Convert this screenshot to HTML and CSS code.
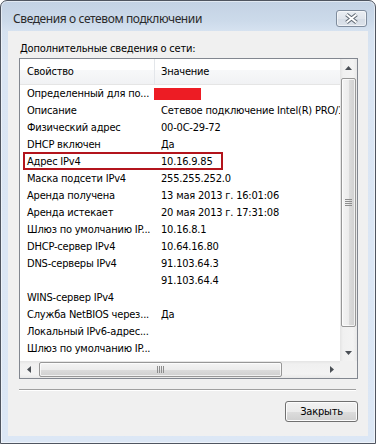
FILE: index.html
```html
<!DOCTYPE html>
<html lang="ru">
<head>
<meta charset="utf-8">
<title>Сведения о сетевом подключении</title>
<link rel="stylesheet" href="styles.css">
</head>
<body>
<div class="window">
  <div class="titlebar">
    <span class="title">Сведения о сетевом подключении</span>
    <div class="close-btn">
      <svg width="29" height="15" viewBox="0 0 29 15">
        <path d="M9.5 3.5 L19.5 11.5 M19.5 3.5 L9.5 11.5" stroke="#5f6873" stroke-width="4" fill="none"/>
        <path d="M9.5 3.5 L19.5 11.5 M19.5 3.5 L9.5 11.5" stroke="#ffffff" stroke-width="2" fill="none"/>
      </svg>
    </div>
  </div>
  <div class="client">
    <div class="label">Дополнительные сведения о сети:</div>
    <div class="listbox">
      <div class="view">
        <div class="header">
          <div class="hc hc1">Свойство</div>
          <div class="hc hc2">Значение</div>
        </div>
        <div class="rows">
          <div class="row"><span class="c1">Определенный для по...</span><span class="redact"></span></div>
          <div class="row"><span class="c1">Описание</span><span class="c2">Сетевое подключение Intel(R) PRO/1000 MT</span></div>
          <div class="row"><span class="c1">Физический адрес</span><span class="c2">00-0C-29-72</span></div>
          <div class="row"><span class="c1">DHCP включен</span><span class="c2">Да</span></div>
          <div class="row marked"><span class="c1">Адрес IPv4</span><span class="c2">10.16.9.85</span><span class="hl"></span></div>
          <div class="row"><span class="c1">Маска подсети IPv4</span><span class="c2">255.255.252.0</span></div>
          <div class="row"><span class="c1">Аренда получена</span><span class="c2">13 мая 2013 г. 16:01:06</span></div>
          <div class="row"><span class="c1">Аренда истекает</span><span class="c2">20 мая 2013 г. 17:31:08</span></div>
          <div class="row"><span class="c1">Шлюз по умолчанию IP...</span><span class="c2">10.16.8.1</span></div>
          <div class="row"><span class="c1">DHCP-сервер IPv4</span><span class="c2">10.64.16.80</span></div>
          <div class="row"><span class="c1">DNS-серверы IPv4</span><span class="c2">91.103.64.3</span></div>
          <div class="row"><span class="c1"></span><span class="c2">91.103.64.4</span></div>
          <div class="row"><span class="c1">WINS-сервер IPv4</span><span class="c2"></span></div>
          <div class="row"><span class="c1">Служба NetBIOS через...</span><span class="c2">Да</span></div>
          <div class="row"><span class="c1">Локальный IPv6-адрес...</span><span class="c2"></span></div>
          <div class="row"><span class="c1">Шлюз по умолчанию IP...</span><span class="c2"></span></div>
          <div class="row"><span class="c1">DNS-серверы IPv6</span><span class="c2"></span></div>
        </div>
      </div>
      <div class="vscroll">
        <div class="sb-btn">
          <svg width="7" height="4" viewBox="0 0 7 4"><path d="M3.5 0 L7 4 L0 4 Z" fill="#4a4f55"/></svg>
        </div>
        <div class="vtrack">
          <div class="vthumb">
            <svg width="7" height="7" viewBox="0 0 7 7">
              <path d="M0 0.5 H7 M0 2.5 H7 M0 4.5 H7 M0 6.5 H7" stroke="#8d8d8d" stroke-width="1"/>
            </svg>
          </div>
        </div>
        <div class="sb-btn">
          <svg width="7" height="4" viewBox="0 0 7 4"><path d="M0 0 L7 0 L3.5 4 Z" fill="#4a4f55"/></svg>
        </div>
      </div>
      <div class="hscroll">
        <div class="sb-btn">
          <svg width="4" height="7" viewBox="0 0 4 7"><path d="M4 0 L4 7 L0 3.5 Z" fill="#4a4f55"/></svg>
        </div>
        <div class="htrack">
          <div class="hthumb">
            <svg width="7" height="7" viewBox="0 0 7 7">
              <path d="M0.5 0 V7 M2.5 0 V7 M4.5 0 V7 M6.5 0 V7" stroke="#8d8d8d" stroke-width="1"/>
            </svg>
          </div>
        </div>
        <div class="sb-btn">
          <svg width="4" height="7" viewBox="0 0 4 7"><path d="M0 0 L4 3.5 L0 7 Z" fill="#4a4f55"/></svg>
        </div>
      </div>
      <div class="corner"></div>
    </div>
    <div class="sep"></div>
    <button class="btn" type="button">Закрыть</button>
  </div>
</div>
</body>
</html>
```

FILE: styles.css
```css
* { box-sizing: border-box; }

html, body {
  margin: 0;
  padding: 0;
}

body {
  width: 376px;
  height: 444px;
  overflow: hidden;
  background: #ffffff;
  font-family: "DejaVu Sans Condensed", "DejaVu Sans", sans-serif;
  font-size: 11px;
  letter-spacing: -0.2px;
  color: #000;
}

.window {
  width: 376px;
  height: 444px;
  border: 1px solid #4f5560;
  border-radius: 7px 7px 0 0;
  background: linear-gradient(to bottom, #c3d2e4 0px, #ccdaea 20px, #d6e2f0 30px, #dae5f3 60px, #dce7f5 100%);
  box-shadow: inset 0 0 0 1px rgba(255, 255, 255, 0.5);
  padding: 0 7px 7px;
  display: flex;
  flex-direction: column;
}

.titlebar {
  height: 30px;
  flex: none;
  display: flex;
  justify-content: space-between;
  align-items: flex-start;
}

.title {
  font-family: "Noto Sans", sans-serif;
  font-size: 12px;
  letter-spacing: -0.4px;
  line-height: 16px;
  margin: 10px 0 0 5px;
  color: #2a2a2a;
  white-space: nowrap;
}

.close-btn {
  width: 31px;
  height: 17px;
  margin: 9px 1px 0 0;
  border: 1px solid #7f8c9d;
  border-radius: 3px;
  background: linear-gradient(to bottom, #eaeef3 0%, #e0e5ec 50%, #d5dce5 51%, #dde3eb 100%);
  box-shadow: inset 0 0 0 1px rgba(255, 255, 255, 0.55);
  display: flex;
}

.client {
  flex: 1;
  background: #f0f0f0;
  padding: 0 10px 0 11px;
  display: flex;
  flex-direction: column;
}

.label {
  margin: 11px 0 0 1px;
  line-height: 13px;
  white-space: nowrap;
}

.listbox {
  margin-top: 3px;
  width: 339px;
  height: 321px;
  flex: none;
  border: 1px solid #828790;
  background: #ffffff;
  display: grid;
  grid-template-columns: 320px 17px;
  grid-template-rows: 302px 17px;
}

.view {
  overflow: hidden;
  grid-column: 1;
  grid-row: 1;
}

.header {
  display: flex;
  height: 26px;
  border-bottom: 1px solid #e5e5e5;
  background: linear-gradient(to bottom, #ffffff 0%, #ffffff 45%, #f7f8f9 46%, #f1f2f4 100%);
  white-space: nowrap;
}

.hc {
  line-height: 26px;
}

.hc1 {
  width: 135px;
  flex: none;
  padding-left: 7px;
  border-right: 1px solid #e3e6ea;
}

.hc2 {
  flex: 1;
  padding-left: 6px;
}

.rows {
  margin-top: -1px;
}

.row {
  display: flex;
  height: 17px;
  line-height: 17px;
  white-space: nowrap;
}

.rows .row:first-child {
  margin-top: 1px;
}

.c1 {
  width: 134px;
  flex: none;
  padding-left: 7px;
  overflow: hidden;
}

.c2 {
  flex: none;
  padding-left: 7px;
}

.redact {
  width: 47px;
  height: 12px;
  margin-top: 3px;
  background: #ed1c24;
  flex: none;
}

.marked {
  position: relative;
}

.hl {
  position: absolute;
  left: 3px;
  top: -1px;
  width: 200px;
  height: 18px;
  border: 2px solid #b3141c;
}

.vscroll {
  grid-column: 2;
  grid-row: 1;
  display: flex;
  flex-direction: column;
  background: linear-gradient(to right, #e4e4e4 0px, #f0f0f0 3px, #f3f3f3 13px, #e8e8e8 17px);
}

.sb-btn {
  width: 17px;
  height: 17px;
  flex: none;
  display: flex;
  align-items: center;
  justify-content: center;
}

.vtrack {
  flex: 1;
  display: flex;
  flex-direction: column;
}

.vthumb {
  margin: 2px 1px 0;
  height: 249px;
  border: 1px solid #979797;
  border-radius: 2px;
  background: linear-gradient(to right, #f4f4f4 0%, #ececec 50%, #dcdcdc 51%, #d0d0d0 100%);
  box-shadow: inset 0 0 0 1px rgba(255, 255, 255, 0.7);
  display: flex;
  align-items: center;
  justify-content: center;
}

.hscroll {
  grid-column: 1;
  grid-row: 2;
  display: flex;
  background: linear-gradient(to bottom, #e4e4e4 0px, #f0f0f0 3px, #f3f3f3 13px, #e8e8e8 17px);
}

.htrack {
  flex: 1;
  display: flex;
}

.hthumb {
  margin: 1px 0 1px 2px;
  width: 243px;
  border: 1px solid #979797;
  border-radius: 2px;
  background: linear-gradient(to bottom, #f4f4f4 0%, #ececec 50%, #dcdcdc 51%, #d0d0d0 100%);
  box-shadow: inset 0 0 0 1px rgba(255, 255, 255, 0.7);
  display: flex;
  align-items: center;
  justify-content: center;
}

.corner {
  grid-column: 2;
  grid-row: 2;
  background: #f0f0f0;
}

.sep {
  margin: 10px 2px 0 0;
  height: 2px;
  flex: none;
  border-top: 1px solid #a0a0a0;
  border-bottom: 1px solid #ffffff;
}

.btn {
  align-self: flex-end;
  margin-top: 10px;
  width: 73px;
  height: 21px;
  padding: 0;
  border: 1px solid #707070;
  border-radius: 3px;
  background: linear-gradient(to bottom, #f2f2f2 0%, #ebebeb 50%, #dddddd 51%, #cfcfcf 100%);
  box-shadow: inset 0 0 0 1px #fcfcfc;
  font-family: "DejaVu Sans Condensed", "DejaVu Sans", sans-serif;
  font-size: 11px;
  letter-spacing: -0.2px;
  color: #000;
}
```
